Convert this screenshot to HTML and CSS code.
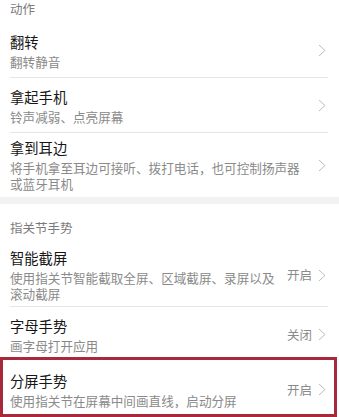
FILE: index.html
```html
<!DOCTYPE html>
<html lang="zh-CN">
<head>
<meta charset="utf-8">
<link rel="stylesheet" href="styles.css">
</head>
<body>
<div class="page">
  <div class="header first">动作</div>
  <div class="row">
    <div class="text"><div class="title">翻转</div><div class="sub">翻转静音</div></div>
    <svg class="chev" viewBox="0 0 8 13" width="8" height="13"><path d="M1 1 L7 6.5 L1 12" /></svg>
  </div>
  <div class="row">
    <div class="text"><div class="title">拿起手机</div><div class="sub">铃声减弱、点亮屏幕</div></div>
    <svg class="chev" viewBox="0 0 8 13" width="8" height="13"><path d="M1 1 L7 6.5 L1 12" /></svg>
  </div>
  <div class="row last">
    <div class="text"><div class="title">拿到耳边</div><div class="sub">将手机拿至耳边可接听、拨打电话，也可控制扬声器或蓝牙耳机</div></div>
    <svg class="chev" viewBox="0 0 8 13" width="8" height="13"><path d="M1 1 L7 6.5 L1 12" /></svg>
  </div>
  <div class="band"></div>
  <div class="header">指关节手势</div>
  <div class="row">
    <div class="text"><div class="title">智能截屏</div><div class="sub">使用指关节智能截取全屏、区域截屏、录屏以及滚动截屏</div></div>
    <span class="value">开启</span>
    <svg class="chev" viewBox="0 0 8 13" width="8" height="13"><path d="M1 1 L7 6.5 L1 12" /></svg>
  </div>
  <div class="row last">
    <div class="text"><div class="title">字母手势</div><div class="sub">画字母打开应用</div></div>
    <span class="value">关闭</span>
    <svg class="chev" viewBox="0 0 8 13" width="8" height="13"><path d="M1 1 L7 6.5 L1 12" /></svg>
  </div>
  <div class="row last highlighted">
    <div class="text"><div class="title">分屏手势</div><div class="sub">使用指关节在屏幕中间画直线，启动分屏</div></div>
    <span class="value">开启</span>
    <svg class="chev" viewBox="0 0 8 13" width="8" height="13"><path d="M1 1 L7 6.5 L1 12" /></svg>
  </div>
</div>
</body>
</html>
```
FILE: styles.css
```css
html, body {
  margin: 0;
  padding: 0;
  background: #ffffff;
}
body {
  font-family: "Noto Sans CJK SC", "Noto Sans", sans-serif;
  width: 339px;
  height: 417px;
  overflow: hidden;
}
.page {
  display: flex;
  flex-direction: column;
}
.header {
  font-size: 12.5px;
  line-height: 16px;
  color: #7a7a7a;
  padding: 16px 10px 7px;
}
.header.first {
  padding-top: 1px;
  padding-bottom: 6px;
}
.row {
  position: relative;
  display: flex;
  align-items: center;
  min-height: 55px;
  box-sizing: border-box;
  padding: 5px 13px 5px 10px;
}
.row::after {
  content: "";
  position: absolute;
  left: 10px;
  right: 11px;
  bottom: 0;
  height: 1px;
  background: #e6e6e6;
}
.row.last::after {
  display: none;
}
.text {
  flex: 1;
  min-width: 0;
  margin-right: 12px;
}
.title {
  font-size: 14.3px;
  line-height: 20px;
  color: #161616;
}
.sub {
  font-size: 12.6px;
  line-height: 16px;
  margin-top: 2px;
  color: #8a8a8a;
}
.value {
  font-size: 12.5px;
  line-height: 16px;
  color: #8a8a8a;
  margin-right: 6px;
}
.chev {
  flex: none;
  display: block;
}
.chev path {
  fill: none;
  stroke: #bdbdbd;
  stroke-width: 1;
}
.band {
  height: 7px;
  background: #f2f2f2;
}
.highlighted::before {
  content: "";
  position: absolute;
  left: 0;
  right: 2px;
  top: -5px;
  bottom: 0;
  border: 3px solid #a8293c;
  pointer-events: none;
}
```
